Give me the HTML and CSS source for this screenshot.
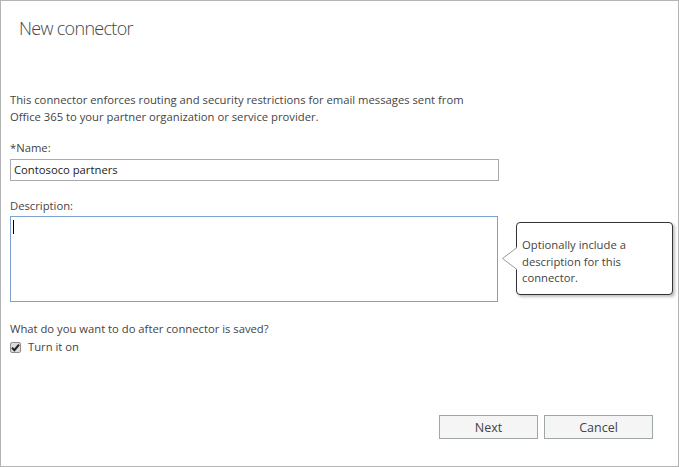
FILE: index.html
```html
<!DOCTYPE html>
<html>
<head>
<meta charset="utf-8">
<link rel="stylesheet" href="styles.css">
</head>
<body>
<div class="dialog">
  <h1 class="title">New connector</h1>
  <div class="content">
    <p class="intro">This connector enforces routing and security restrictions for email messages sent from Office 365 to your partner organization or service provider.</p>
    <label class="label">*Name:</label>
    <div class="name-input">Contosoco partners</div>
    <label class="label desc-label">Description:</label>
    <div class="desc-row">
      <div class="desc-area"><span class="caret"></span></div>
      <div class="callout">
        <svg class="callout-arrow" width="17" height="24" viewBox="0 0 17 24"><polyline points="16,0.5 1.5,11.5 16,22.5" fill="#fff" stroke="#9a9a9a" stroke-width="1"/></svg>
        Optionally include a description for this connector.
      </div>
    </div>
    <p class="question">What do you want to do after connector is saved?</p>
    <div class="check-row">
      <span class="checkbox"><svg width="9" height="9" viewBox="0 0 9 9"><path d="M1 4.8 L3.4 7.2 L8 1.6" fill="none" stroke="#222" stroke-width="2"/></svg></span>
      <span>Turn it on</span>
    </div>
  </div>
  <div class="footer">
    <button class="btn btn-next">Next</button>
    <button class="btn btn-cancel">Cancel</button>
  </div>
</div>
</body>
</html>
```
FILE: styles.css
```css
html, body {
  margin: 0;
  padding: 0;
  background: #fff;
}
.dialog {
  box-sizing: border-box;
  width: 679px;
  height: 467px;
  border: 1px solid #b4b4b4;
  display: flex;
  flex-direction: column;
  font-family: "Open Sans", "Noto Sans", sans-serif;
  font-size: 11.25px;
  color: #444;
}
.title {
  margin: 13px 0 0 18px;
  font-size: 18px;
  letter-spacing: -0.7px;
  font-weight: 300;
  line-height: 28px;
  color: #444;
}
.content {
  padding-left: 9px;
  margin-top: 50px;
}
.intro {
  margin: 0;
  width: 480px;
  line-height: 16.7px;
}
.label {
  display: block;
  margin-top: 15px;
  line-height: 16px;
}
.name-input {
  box-sizing: border-box;
  margin-top: 3px;
  width: 489px;
  height: 22px;
  border: 1px solid #ababab;
  padding: 2px 3px;
  line-height: 16px;
  color: #222;
}
.desc-label {
  margin-top: 17px;
}
.desc-row {
  display: flex;
  align-items: flex-start;
  margin-top: 2px;
}
.desc-area {
  box-sizing: border-box;
  width: 488px;
  height: 86px;
  border: 1px solid #7da2ce;
  padding: 3px 2px;
}
.caret {
  display: block;
  width: 1px;
  height: 14px;
  background: #000;
}
.callout {
  position: relative;
  box-sizing: border-box;
  width: 157px;
  height: 73px;
  margin: 6px 0 0 18px;
  border: 1px solid #333;
  border-radius: 4px;
  box-shadow: 2px 2px 3px rgba(0,0,0,0.25);
  background: #fff;
  padding: 14px 8px 0 5px;
  line-height: 16.5px;
  color: #444;
}
.callout-arrow {
  position: absolute;
  left: -16px;
  top: 24px;
}
.question {
  margin: 19px 0 0;
  line-height: 16px;
}
.check-row {
  display: flex;
  align-items: center;
  gap: 7px;
  margin-top: 2px;
  line-height: 16px;
}
.checkbox {
  box-sizing: border-box;
  width: 11px;
  height: 11px;
  border: 1px solid #8f8f8f;
  border-radius: 2px;
  background: #dcdcdc;
  display: flex;
  align-items: center;
  justify-content: center;
}
.checkbox svg { display: block; }
.footer {
  margin-top: auto;
  display: flex;
  justify-content: flex-end;
  gap: 6px;
  padding: 0 25px 27px 0;
}
.btn {
  box-sizing: border-box;
  height: 24px;
  border: 1px solid #9ea6a6;
  background: #f5f5f5;
  font-family: "Open Sans", "Noto Sans", sans-serif;
  font-size: 12.5px;
  color: #444;
  padding: 0;
}
.btn-next { width: 99px; }
.btn-cancel { width: 109px; }
```
